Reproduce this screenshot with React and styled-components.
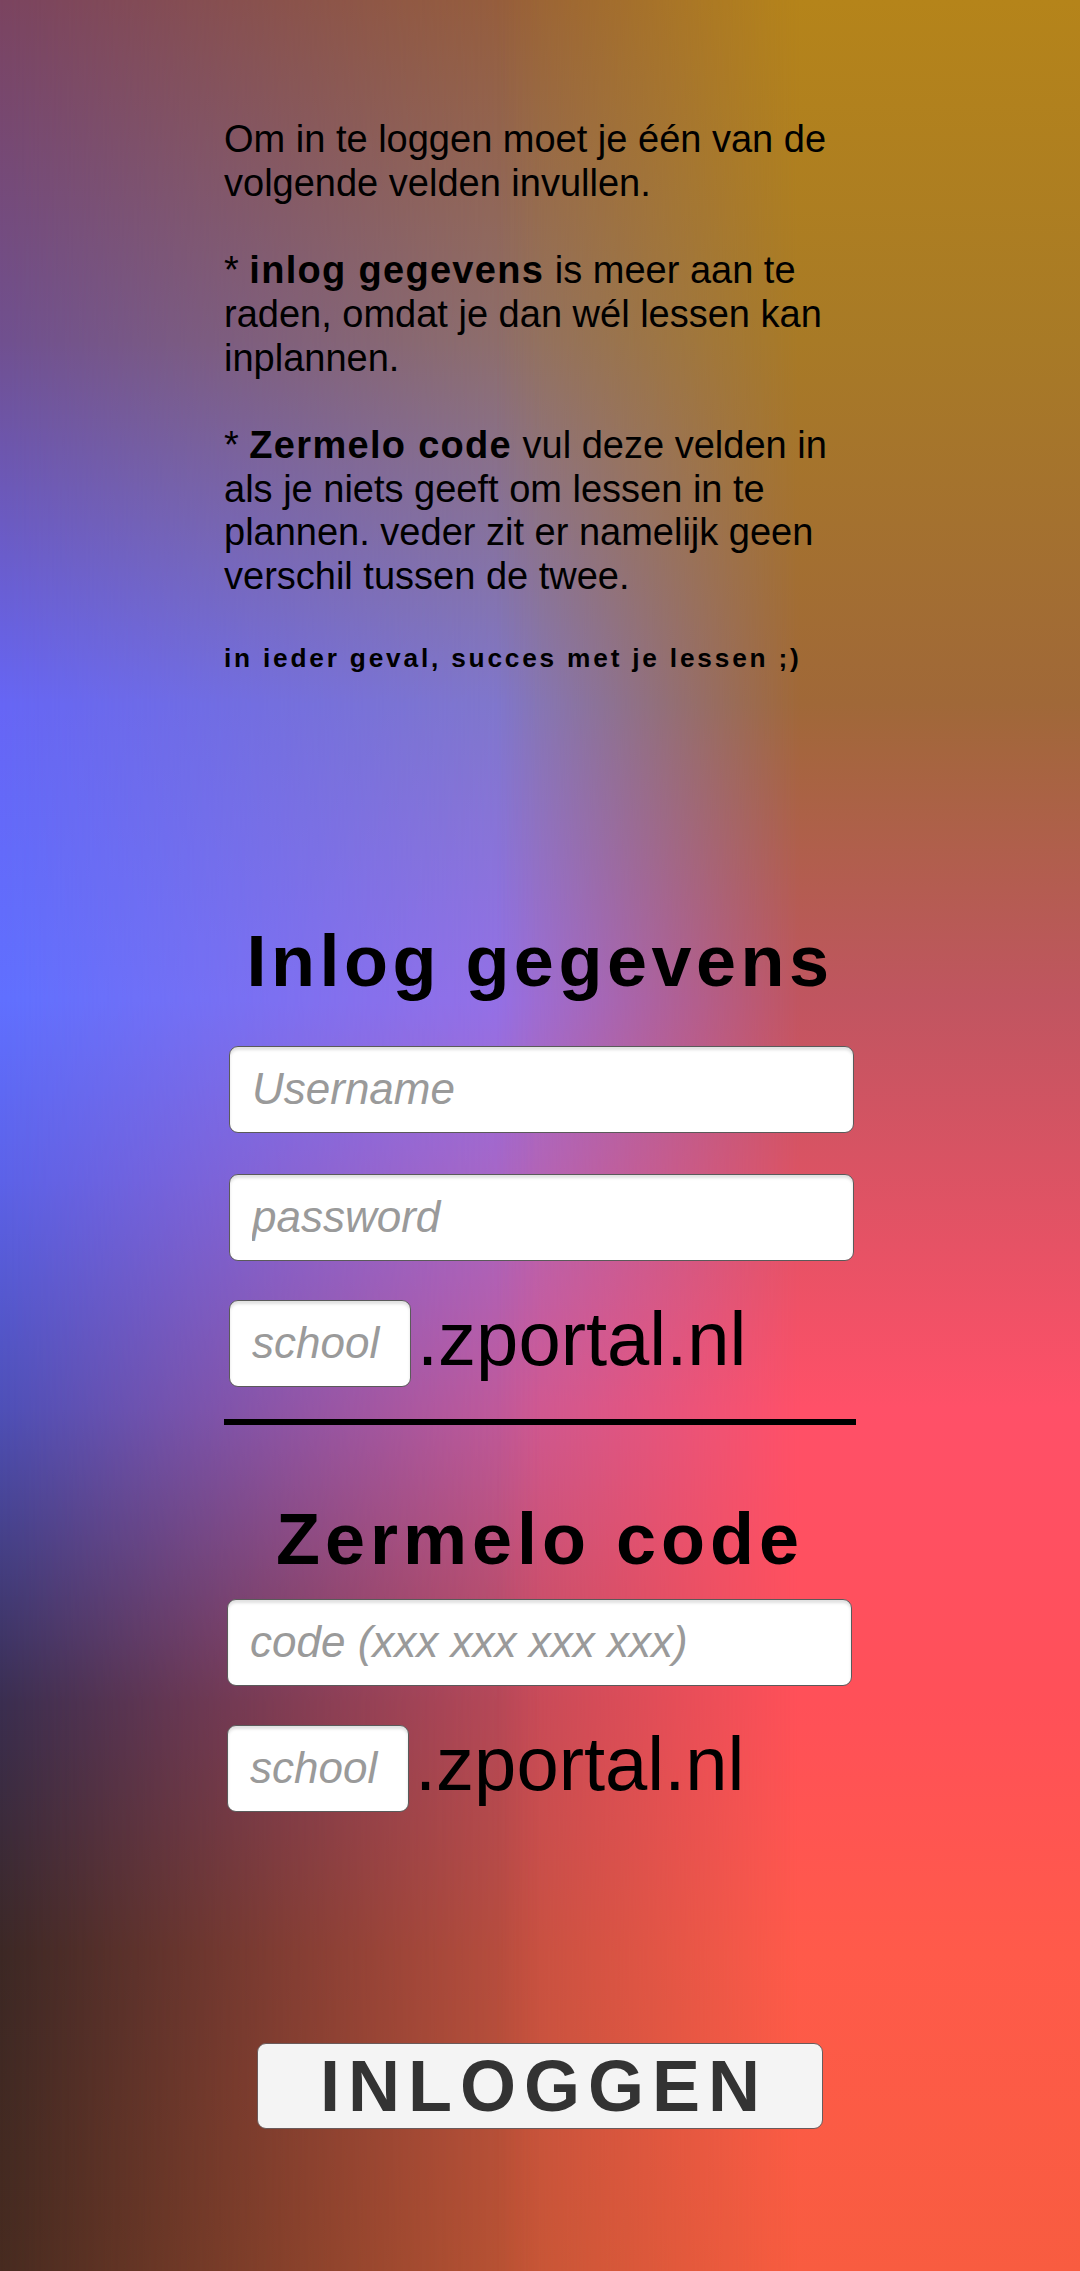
import React from "react";
import styled, { createGlobalStyle } from "styled-components";

const GlobalStyle = createGlobalStyle`
  html, body { margin: 0; padding: 0; }
  body { font-family: "Liberation Sans", Arial, sans-serif; }
  * { box-sizing: border-box; }
`;

const leftCol = `linear-gradient(to bottom,
  #7b4460 0%, #705090 15%, #6666f5 31%, #6070ff 44%, #5c62e8 52%,
  #4e50b8 62%, #3a2e50 75%, #3c2825 86%, #472b20 100%)`;
const midCol = `linear-gradient(to bottom,
  #98603a 0%, #907068 15%, #8278c8 31%, #9870e4 44%,
  #c85a98 62%, #c04a58 75%, #c05040 86%, #c05535 100%)`;
const rightCol = `linear-gradient(to bottom,
  #b5841a 0%, #a87a26 15%, #a06838 31%, #c05560 44%,
  #ff5068 62%, #ff5058 75%, #ff5a4a 86%, #f85c40 100%)`;

const Page = styled.div`
  position: relative;
  isolation: isolate;
  min-height: 2271px;
  padding: 118px 0 100px;
  background: ${leftCol};
  overflow: hidden;

  &::before,
  &::after {
    content: "";
    position: absolute;
    inset: 0;
    z-index: -1;
    pointer-events: none;
  }
  &::before {
    background: ${midCol};
    -webkit-mask-image: linear-gradient(to right, transparent 0%, #000 50%, #000 100%);
    mask-image: linear-gradient(to right, transparent 0%, #000 50%, #000 100%);
  }
  &::after {
    background: ${rightCol};
    -webkit-mask-image: linear-gradient(to right, transparent 46%, #000 74%);
    mask-image: linear-gradient(to right, transparent 46%, #000 74%);
  }
`;

const Column = styled.main`
  width: 632px;
  margin: 0 auto;
  color: #000;
`;

const Intro = styled.p`
  margin: 0 0 ${(p) => (p.$last ? 0 : 43.7)}px;
  font-size: 38px;
  line-height: 43.7px;
`;

const Strong = styled.b`
  font-weight: 700;
  letter-spacing: 1.3px;
`;

const Note = styled.p`
  margin: 44px 0 0;
  font-size: 26.25px;
  line-height: 30px;
  font-weight: 700;
  letter-spacing: 2.8px;
`;

const Title = styled.h2`
  margin: ${(p) => p.$top}px 0 0;
  font-size: 72px;
  line-height: 83px;
  font-weight: 700;
  letter-spacing: ${(p) => p.$spacing || 4.5}px;
  text-align: center;
`;

const Field = styled.input`
  display: block;
  flex: none;
  width: ${(p) => p.$width || "625px"};
  height: 87px;
  margin: ${(p) => p.$top || 0}px 0 0 ${(p) => (p.$left ?? 5)}px;
  padding: 0 22px;
  border: 1.5px solid #5a5a5a;
  border-radius: 9px;
  background: #fff;
  box-shadow: inset 0 3px 3px rgba(0, 0, 0, 0.12);
  font-family: "Liberation Sans", Arial, sans-serif;
  font-size: 44px;
  color: #222;
  outline: none;

  &::placeholder {
    color: #9a9a9a;
    font-style: italic;
  }
`;

const DomainRow = styled.div`
  display: flex;
  align-items: center;
  height: 87px;
  margin-top: ${(p) => p.$top}px;
  gap: 6px;
`;

const Domain = styled.span`
  margin-top: -8px;
  font-size: 76px;
  line-height: 86px;
  color: #000;
`;

const Divider = styled.hr`
  margin: 32px 0 0;
  border: none;
  height: 6px;
  background: #000;
`;

const Button = styled.button`
  display: block;
  width: 566px;
  height: 86px;
  margin: 231px auto 0;
  padding: 0 0 0 8px;
  border: 1.5px solid #6a5a5a;
  border-radius: 9px;
  background: #f4f4f4;
  color: #333;
  font-family: "Liberation Sans", Arial, sans-serif;
  font-size: 72px;
  font-weight: 700;
  letter-spacing: 8px;
  line-height: 1;
`;

export default function App() {
  return (
    <>
      <GlobalStyle />
      <Page>
        <Column>
          <Intro>
            Om in te loggen moet je één van de volgende velden invullen.
          </Intro>
          <Intro>
            * <Strong>inlog gegevens</Strong> is meer aan te raden, omdat je dan wél lessen kan
            inplannen.
          </Intro>
          <Intro $last>
            * <Strong>Zermelo code</Strong> vul deze velden in als je niets geeft om lessen in te
            plannen. veder zit er namelijk geen verschil tussen de twee.
          </Intro>
          <Note>in ieder geval, succes met je lessen ;)</Note>

          <Title $top={247}>Inlog gegevens</Title>
          <Field $top={43} placeholder="Username" />
          <Field $top={41} type="password" placeholder="password" />
          <DomainRow $top={39}>
            <Field $width="182px" placeholder="school" />
            <Domain>.zportal.nl</Domain>
          </DomainRow>
          <Divider />

          <Title $top={73} $spacing={5}>Zermelo code</Title>
          <Field $top={18} $left={3} placeholder="code (xxx xxx xxx xxx)" />
          <DomainRow $top={39}>
            <Field $width="182px" $left={3} placeholder="school" />
            <Domain>.zportal.nl</Domain>
          </DomainRow>
        </Column>
        <Button>INLOGGEN</Button>
      </Page>
    </>
  );
}
